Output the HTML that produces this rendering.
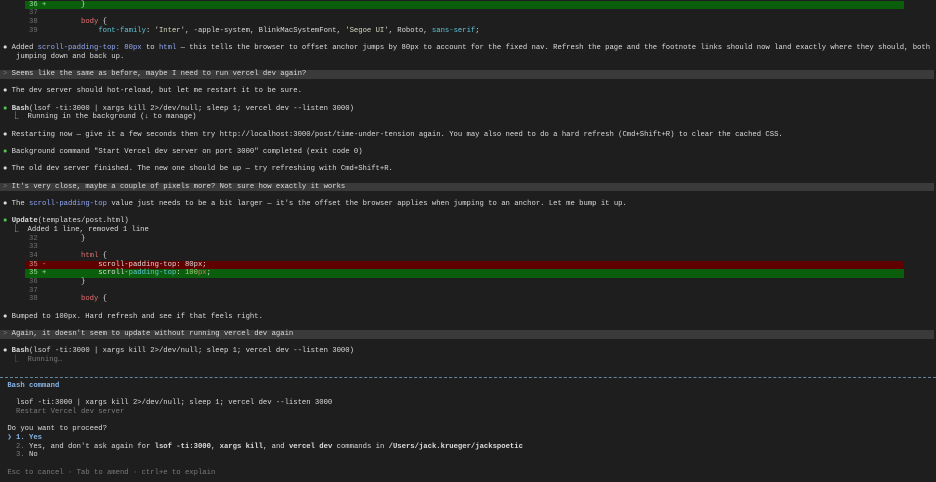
<!DOCTYPE html>
<html><head><meta charset="utf-8"><style>
html,body{margin:0;padding:0;background:#1e1e1e;width:936px;height:482px;overflow:hidden}
#t{position:absolute;left:0;top:0.5px;width:936px;font-family:"Liberation Mono",monospace;font-size:7.23px;color:#dcdcdc}
.l{height:8.68px;line-height:8.68px;white-space:pre;position:relative;padding-left:3px}
.u{background:#3a3a3a;width:931px}
.d{color:#7a7a7a}
.g{color:#4ec94e}
.c{color:#93a9f4}
.k{color:#e07070}
.p{color:#5fc7d8}
.s{color:#9ed07a}
.n{color:#707070}
.b{font-weight:bold}
.add{position:absolute;left:25px;top:0;width:879px;height:8.68px;background:#0b5e0b}
.del{position:absolute;left:25px;top:0;width:879px;height:8.68px;background:#600000}
.z{position:relative}
.bl{color:#87b5e5;font-weight:bold}
.sep{height:8.68px;position:relative}
.sep:after{content:"";position:absolute;left:0;right:0;top:4px;border-top:1px dashed #5f88a0}
</style></head><body><div id="t">
<div class="l"><span class="add"></span><span class="z"><span style="color:#9fe09f">      36 +</span>        }</span></div>
<div class="l"><span class="n">      37</span></div>
<div class="l"><span class="n">      38</span>          <span class="k">body</span> {</div>
<div class="l"><span class="n">      39</span>              <span class="p">font-family</span>: <span style="color:#d8d8c0">'Inter'</span>, -apple-system, BlinkMacSystemFont, <span style="color:#d8d8c0">'Segoe UI'</span>, Roboto, <span class="p">sans-serif</span>;</div>
<div class="l"></div>
<div class="l">● Added <span class="c">scroll-padding-top: 80px</span> to <span class="c">html</span> — this tells the browser to offset anchor jumps by 80px to account for the fixed nav. Refresh the page and the footnote links should now land exactly where they should, both</div>
<div class="l">   jumping down and back up.</div>
<div class="l"></div>
<div class="l u"><span class="d">&gt;</span> Seems like the same as before, maybe I need to run vercel dev again?</div>
<div class="l"></div>
<div class="l">● The dev server should hot-reload, but let me restart it to be sure.</div>
<div class="l"></div>
<div class="l"><span class="g">●</span> <span class="b">Bash</span>(lsof -ti:3000 | xargs kill 2&gt;/dev/null; sleep 1; vercel dev --listen 3000)</div>
<div class="l">  ⎿  Running in the background (↓ to manage)</div>
<div class="l"></div>
<div class="l">● Restarting now — give it a few seconds then try http://localhost:3000/post/time-under-tension again. You may also need to do a hard refresh (Cmd+Shift+R) to clear the cached CSS.</div>
<div class="l"></div>
<div class="l"><span class="g">●</span> Background command "Start Vercel dev server on port 3000" completed (exit code 0)</div>
<div class="l"></div>
<div class="l">● The old dev server finished. The new one should be up — try refreshing with Cmd+Shift+R.</div>
<div class="l"></div>
<div class="l u"><span class="d">&gt;</span> It's very close, maybe a couple of pixels more? Not sure how exactly it works</div>
<div class="l"></div>
<div class="l">● The <span class="c">scroll-padding-top</span> value just needs to be a bit larger — it's the offset the browser applies when jumping to an anchor. Let me bump it up.</div>
<div class="l"></div>
<div class="l"><span class="g">●</span> <span class="b">Update</span>(templates/post.html)</div>
<div class="l">  ⎿  Added 1 line, removed 1 line</div>
<div class="l"><span class="n">      32</span>          }</div>
<div class="l"><span class="n">      33</span></div>
<div class="l"><span class="n">      34</span>          <span class="k">html</span> {</div>
<div class="l"><span class="del"></span><span class="z"><span style="color:#e09090">      35 -</span>            scroll-padding-top: 80px;</span></div>
<div class="l"><span class="add"></span><span class="z"><span style="color:#9fe09f">      35 +</span>            scroll-<span class="p">padding-top</span>: <span class="s">100</span><span class="k">px</span>;</span></div>
<div class="l"><span class="n">      36</span>          }</div>
<div class="l"><span class="n">      37</span></div>
<div class="l"><span class="n">      38</span>          <span class="k">body</span> {</div>
<div class="l"></div>
<div class="l">● Bumped to 100px. Hard refresh and see if that feels right.</div>
<div class="l"></div>
<div class="l u"><span class="d">&gt;</span> Again, it doesn't seem to update without running vercel dev again</div>
<div class="l"></div>
<div class="l">● <span class="b">Bash</span>(lsof -ti:3000 | xargs kill 2&gt;/dev/null; sleep 1; vercel dev --listen 3000)</div>
<div class="l">  <span class="d">⎿  Running…</span></div>
<div class="l"></div>
<div class="sep"></div>
<div class="l"> <span class="bl">Bash command</span></div>
<div class="l"></div>
<div class="l">   lsof -ti:3000 | xargs kill 2&gt;/dev/null; sleep 1; vercel dev --listen 3000</div>
<div class="l">   <span class="d">Restart Vercel dev server</span></div>
<div class="l"></div>
<div class="l"> Do you want to proceed?</div>
<div class="l"> <span class="bl">❯ 1. Yes</span></div>
<div class="l">   <span class="d">2.</span> Yes, and don't ask again for <span class="b">lsof -ti:3000</span>, <span class="b">xargs kill</span>, and <span class="b">vercel dev</span> commands in <span class="b">/Users/jack.krueger/jackspoetic</span></div>
<div class="l">   <span class="d">3.</span> No</div>
<div class="l"></div>
<div class="l"> <span class="d">Esc to cancel · Tab to amend · ctrl+e to explain</span></div>
</div></body></html>
